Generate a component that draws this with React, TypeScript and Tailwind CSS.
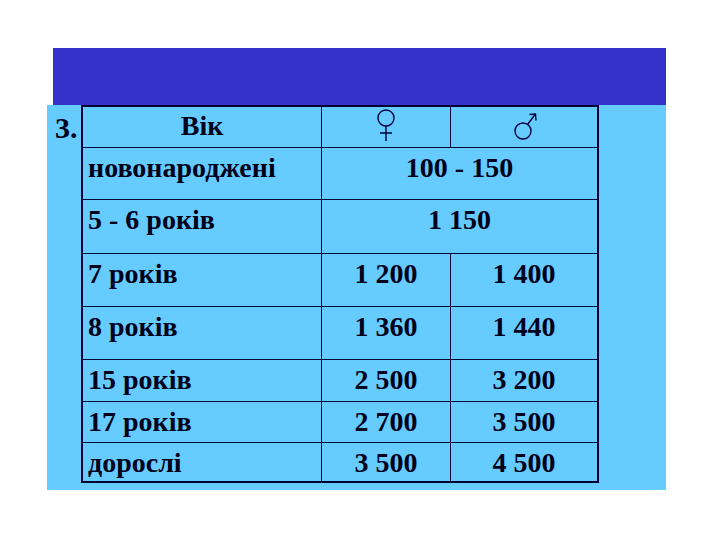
import React from "react";

const rows = [
  { age: "7 років", f: "1 200", m: "1 400", h: "h-[52px]" },
  { age: "8 років", f: "1 360", m: "1 440", h: "h-[52px]" },
  { age: "15 років", f: "2 500", m: "3 200", h: "h-[41px]" },
  { age: "17 років", f: "2 700", m: "3 500", h: "h-[40px]" },
  { age: "дорослі", f: "3 500", m: "4 500", h: "h-[38px]" },
];

function Female() {
  return (
    <svg width="24" height="34" viewBox="0 0 24 34" fill="none" stroke="#00003a" strokeWidth="1.4">
      <circle cx="12" cy="11" r="8" />
      <path d="M12 19 V34 M6 26 H18" />
    </svg>
  );
}

function Male() {
  return (
    <svg width="30" height="34" viewBox="0 0 30 34" fill="none" stroke="#00003a" strokeWidth="1.4">
      <circle cx="14" cy="24" r="8" />
      <path d="M18.5 17.5 L26.5 7 M20.5 7.5 L26.5 7 L27 13.5" />
    </svg>
  );
}

export default function App() {
  const cell = "bg-[#66ccff] pt-[6px]";
  return (
    <div className="w-[720px] h-[540px] bg-white pt-[48px] font-['Liberation_Serif',serif] font-bold text-[28px] leading-none text-[#00001a]">
      {/* title bar */}
      <div className="ml-[53px] w-[613px] h-[57px] bg-[#3333cc]" />

      {/* slide body */}
      <div className="ml-[47px] w-[619px] h-[385px] bg-[#66ccff] flex">
        <div className="w-[34px] pl-[8px] pt-[8px] text-[30px]">3.</div>

        <div className="border-2 border-[#000033] bg-[#000033] grid grid-cols-[238px_128px_146px] gap-px self-start">
          {/* header */}
          <div className="bg-[#66ccff] h-[40px] pt-[5px] text-center">Вік</div>
          <div className="bg-[#66ccff] h-[40px] flex justify-center">
            <Female />
          </div>
          <div className="bg-[#66ccff] h-[40px] flex justify-center">
            <Male />
          </div>

          <div className={`${cell} h-[51px] pl-[5px]`}>новонароджені</div>
          <div className={`${cell} h-[51px] col-span-2 text-center`}>100 - 150</div>

          <div className={`${cell} h-[53px] pl-[5px]`}>5 - 6 років</div>
          <div className={`${cell} h-[53px] col-span-2 text-center`}>1 150</div>

          {rows.map((r) => (
            <React.Fragment key={r.age}>
              <div className={`${cell} ${r.h} pl-[5px]`}>{r.age}</div>
              <div className={`${cell} ${r.h} text-center`}>{r.f}</div>
              <div className={`${cell} ${r.h} text-center`}>{r.m}</div>
            </React.Fragment>
          ))}
        </div>
      </div>
    </div>
  );
}
